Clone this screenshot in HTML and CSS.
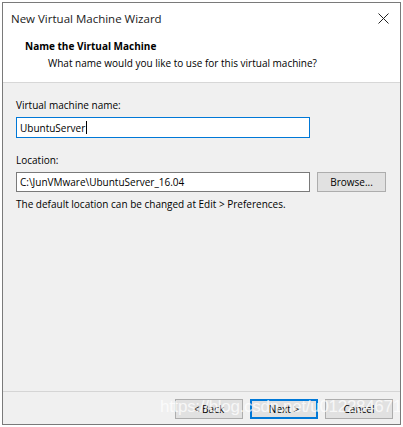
FILE: index.html
```html
<!DOCTYPE html>
<html>
<head>
<meta charset="utf-8">
<link rel="stylesheet" href="styles.css">
</head>
<body>
<div class="window">
  <div class="titlebar">
    <span class="title">New Virtual Machine Wizard</span>
    <svg class="close" width="11" height="11" viewBox="0 0 11 11"><path d="M0.5 0.5 L10.5 10.5 M10.5 0.5 L0.5 10.5" stroke="#222" stroke-width="1"/></svg>
  </div>
  <div class="header">
    <div class="h-title">Name the Virtual Machine</div>
    <div class="h-sub">What name would you like to use for this virtual machine?</div>
  </div>
  <div class="content">
    <div class="label lbl-name">Virtual machine name:</div>
    <div class="input focused">UbuntuServer<span class="caret"></span></div>
    <div class="label lbl-loc">Location:</div>
    <div class="row">
      <div class="input">C:\JunVMware\UbuntuServer_16.04</div>
      <div class="btn browse">Browse...</div>
    </div>
    <div class="note">The default location can be changed at Edit &gt; Preferences.</div>
    <div class="spacer"></div>
    <div class="footer">
      <div class="btn">&lt; Back</div>
      <div class="btn default">Next &gt;</div>
      <div class="btn">Cancel</div>
      <div class="watermark">https://blog.csdn.net/u012284671</div>
    </div>
  </div>
</div>
</body>
</html>
```

FILE: styles.css
```css
html, body {
  margin: 0;
  padding: 0;
  background: #ffffff;
}
body {
  font-family: "Open Sans", "Noto Sans", "Liberation Sans", sans-serif;
  font-size: 10px;
  color: #000;
}
.window {
  margin: 2px 0 0 2px;
  width: 399px;
  height: 423px;
  box-sizing: border-box;
  border: 1px solid #7a7a7a;
  display: flex;
  flex-direction: column;
  background: #f0f0f0;
  overflow: hidden;
}
.titlebar {
  height: 30px;
  background: #fff;
  display: flex;
  align-items: center;
  justify-content: space-between;
  padding: 0 11px 0 8px;
}
.title {
  font-size: 11.5px;
  color: #1a1a1a;
}
.close { display: block; }
.header {
  background: #fff;
  border-bottom: 1px solid #d7d7d7;
  box-sizing: border-box;
  height: 50px;
  padding: 5px 0 0 22px;
}
.h-title {
  font-weight: 700;
  line-height: 16px;
}
.h-sub {
  padding-left: 23px;
  line-height: 16px;
  margin-top: 1px;
}
.content {
  flex: 1;
  display: flex;
  flex-direction: column;
  padding: 0 0 0 13px;
}
.label {
  line-height: 14px;
}
.lbl-name { margin-top: 15px; }
.lbl-loc { margin-top: 15px; }
.input {
  box-sizing: border-box;
  width: 294px;
  height: 21px;
  background: #fff;
  border: 1px solid #7a7a7a;
  padding: 0 0 0 3px;
  margin-top: 5px;
  display: flex;
  align-items: center;
}
.input.focused {
  border-color: #0078d7;
}
.caret {
  display: inline-block;
  width: 1px;
  height: 13px;
  background: #000;
  margin-left: 1px;
}
.row {
  display: flex;
  align-items: flex-end;
  gap: 7px;
}
.row .input { height: 20px; }
.btn {
  box-sizing: border-box;
  width: 68px;
  height: 20px;
  border: 1px solid #adadad;
  background: #e1e1e1;
  display: flex;
  align-items: center;
  justify-content: center;
}
.browse { width: 69px; }
.note {
  margin-top: 5px;
  line-height: 14px;
}
.spacer { flex: 1; }
.footer {
  position: relative;
  margin-left: -13px;
  border-top: 1px solid #d5d5d5;
  height: 33px;
  box-sizing: border-box;
  display: flex;
  justify-content: flex-end;
  align-items: flex-start;
  gap: 7px;
  padding: 7px 7px 0 0;
  overflow: hidden;
}
.btn.default {
  border: 1px solid #0078d7;
  box-shadow: inset 0 0 0 1px #0078d7;
}
.watermark {
  position: absolute;
  left: 157px;
  top: 5px;
  font-family: "Liberation Sans", sans-serif;
  font-size: 17px;
  letter-spacing: -0.3px;
  color: rgba(255, 255, 255, 0.75);
  white-space: nowrap;
  pointer-events: none;
}
```
